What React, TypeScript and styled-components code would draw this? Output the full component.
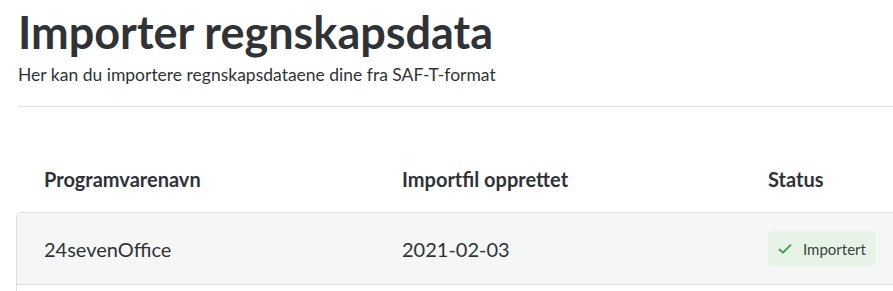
import styled, { createGlobalStyle } from 'styled-components';

const GlobalStyle = createGlobalStyle`
    body {
        margin: 0;
        background: #ffffff;
        font-family: Lato, 'Noto Sans', sans-serif;
        color: #2f3337;
        overflow: hidden;
    }
`;

const rows = [
    { software: '24sevenOffice', created: '2021-02-03', status: 'Importert' },
];

const App = () => {
    return (
        <>
            <GlobalStyle />
            <Page>
                <PageHeader>
                    <Title>Importer regnskapsdata</Title>
                    <Lead>Her kan du importere regnskapsdataene dine fra SAF-T-format</Lead>
                </PageHeader>

                <Table>
                    <HeadRow>
                        <HeadCell>Programvarenavn</HeadCell>
                        <HeadCell>Importfil opprettet</HeadCell>
                        <HeadCell>Status</HeadCell>
                    </HeadRow>
                    <Body>
                        {rows.map((row) => (
                            <Row key={row.software}>
                                <Cell>{row.software}</Cell>
                                <Cell>{row.created}</Cell>
                                <Cell>
                                    <Badge>
                                        <svg width="16" height="16" viewBox="0 0 16 16" fill="none">
                                            <path d="M2.5 8.5l3.5 3.2 7.5-7.5" stroke="#2ea043" strokeWidth="1.8" strokeLinecap="round" strokeLinejoin="round" />
                                        </svg>
                                        {row.status}
                                    </Badge>
                                </Cell>
                            </Row>
                        ))}
                    </Body>
                </Table>
            </Page>
        </>
    );
};

export default App;

const Page = styled.div`
    padding: 0 0 0 18px;
`;

const PageHeader = styled.header`
    border-bottom: 1px solid #dadbdd;
    padding-bottom: 20px;
`;

const Title = styled.h1`
    margin: 0;
    padding-top: 4px;
    font-size: 45px;
    font-weight: 700;
    line-height: 56px;
    color: #2f3337;
`;

const Lead = styled.p`
    margin: 4px 0 0;
    font-size: 17.5px;
    line-height: 22px;
    color: #2f3337;
`;

const Table = styled.div`
    margin-top: 43px;
    margin-left: -2px;
    width: 900px;
`;

const columns = `358px 366px 1fr`;

const HeadRow = styled.div`
    display: grid;
    grid-template-columns: ${columns};
    height: 62px;
    padding-bottom: 4px;
    box-sizing: border-box;
    align-items: center;
`;

const HeadCell = styled.div`
    padding-left: 28px;
    font-size: 20px;
    font-weight: 700;
    color: #2f3337;
`;

const Body = styled.div`
    min-height: 120px;
    border: 1px solid #dcdde0;
    border-radius: 4px;
    overflow: hidden;
`;

const Row = styled.div`
    display: grid;
    grid-template-columns: ${columns};
    height: 71px;
    align-items: center;
    background: #f5f6f6;
    border-bottom: 1px solid #dcdde0;
`;

const Cell = styled.div`
    padding-left: 27px;
    font-size: 20px;
    color: #2f3337;
`;

const Badge = styled.span`
    display: inline-flex;
    align-items: center;
    gap: 10px;
    height: 35px;
    padding: 0 9px 0 9px;
    border-radius: 4px;
    background: #e8f3e7;
    font-size: 15px;
    color: #3a3f44;
`;
